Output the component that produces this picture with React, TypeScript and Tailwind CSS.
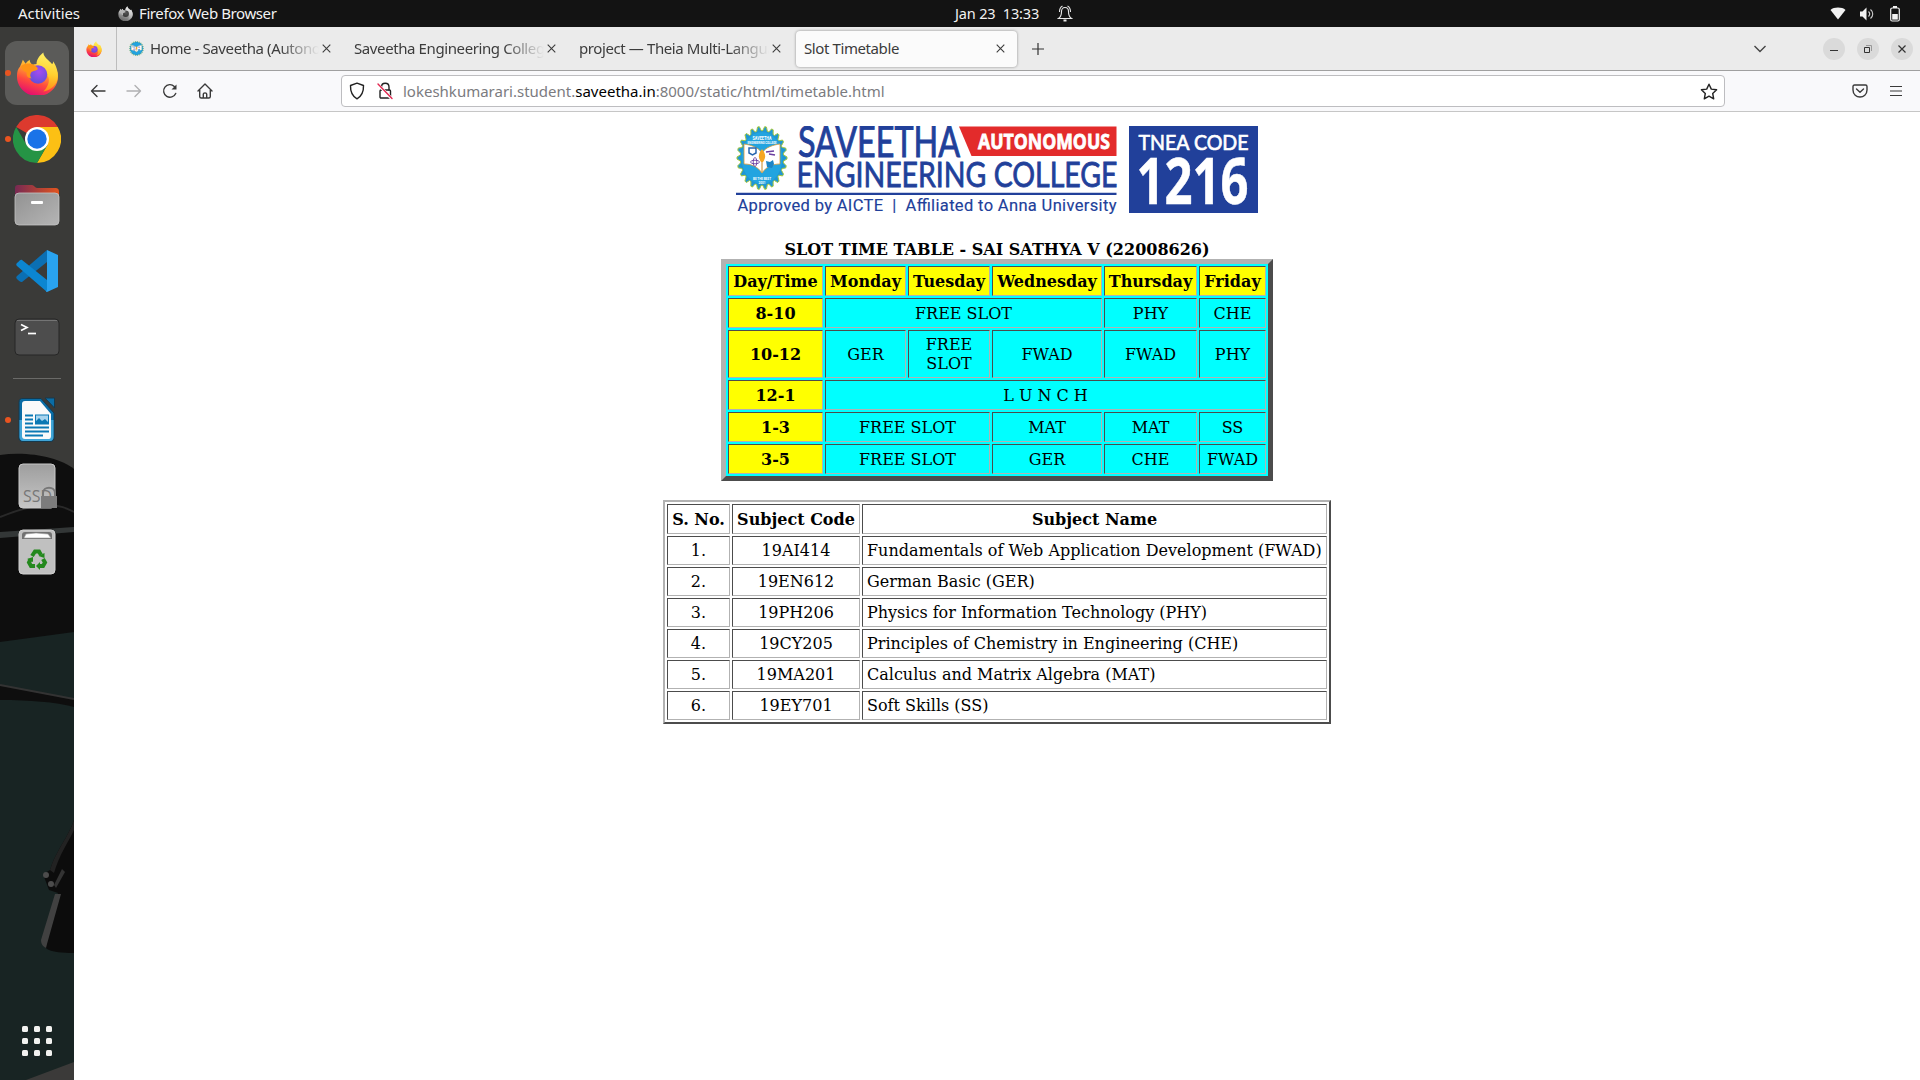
import React from "react";

const Firefox = ({ size, mono = false, id }: { size: number; mono?: boolean; id: string }) => (
  <svg width={size} height={size} viewBox="0 0 44 44" className="shrink-0">
    <defs>
      <linearGradient id={id + "a"} x1="0.75" y1="0" x2="0.35" y2="1">
        <stop offset="0" stopColor={mono ? "#f0f0f0" : "#fff44f"} />
        <stop offset="0.35" stopColor={mono ? "#c8c8c8" : "#ffa52e"} />
        <stop offset="0.65" stopColor={mono ? "#8a8a8a" : "#ff4b3e"} />
        <stop offset="1" stopColor={mono ? "#666" : "#e20a72"} />
      </linearGradient>
      <linearGradient id={id + "c"} x1="0.6" y1="0" x2="0.5" y2="1">
        <stop offset="0" stopColor={mono ? "#eee" : "#fff36a"} />
        <stop offset="0.55" stopColor={mono ? "#ccc" : "#ffd02f"} />
        <stop offset="1" stopColor={mono ? "#999" : "#ff8a16"} />
      </linearGradient>
      <radialGradient id={id + "b"} cx="0.55" cy="0.35" r="0.7">
        <stop offset="0" stopColor={mono ? "#555" : "#a64bf0"} />
        <stop offset="1" stopColor={mono ? "#333" : "#5b4fd8"} />
      </radialGradient>
    </defs>
    <path d="M7 8c1 1 2 3 3 4 1-2 3-3 4-4 0 2 1 4 3 5 3-1 8-1 12 2l8-3c4 4 6 8 6 13 0 11-9 20-21 20S1 36 1 25c0-5 1-8 3-10 1-2 2-4 3-7z" fill={"url(#" + id + "a)"} />
    <path d="M28 0.500c0 5 6 8 9 12 1-1 1-2 1-3 4 6 6 13 4 20-2 6-8 10-14 11 4-4 7-10 5-15-2-6-12-7-12-13 0-5 3-9 7-12z" fill={"url(#" + id + "c)"} />
    <circle cx="22.500" cy="23" r="9.500" fill={"url(#" + id + "b)"} />
    <path d="M5 15c3-4 9-4 13-2 3 2 5 3 4 5-2 2-6 1-7 4-1 2 0 4 1 5-3 0-6-2-5-6-2-1-5-3-6-6z" fill={mono ? "#b5b5b5" : "#ff9416"} />
  </svg>
);

const gearPath = (() => {
  let d = "";
  const teeth = 22;
  for (let i = 0; i < teeth * 4; i++) {
    const a = ((i - 0.5) / (teeth * 4)) * Math.PI * 2;
    const k = i % 4 < 2 ? 1 : 0.87;
    d += (i ? "L" : "M") + (26 + 25 * k * Math.cos(a)).toFixed(2) + " " + (32 + 31.5 * k * Math.sin(a)).toFixed(2);
  }
  return d + "Z";
})();

const Emblem = ({ w, h, small = false }: { w: number; h: number; small?: boolean }) => (
  <svg width={w} height={h} x="0" y="0" viewBox="0 0 52 64" preserveAspectRatio="none">
    <path d={gearPath} fill="#2196d3" stroke="#a5c83c" strokeWidth="1" />
    <ellipse cx="26" cy="32" rx="20.500" ry="26" fill="#22a4e0" />
    <path d="M8 18c7 1 14 3 18 9 4-6 11-8 18-9v20c-8 0-14 3-18 9-4-6-10-9-18-9z" fill="#fff" stroke="#d99b35" strokeWidth="0.8" />
    <path d="M26 27v19" stroke="#c98722" strokeWidth="1" />
    <path d="M26 23c4 5 4 9 1 13h-2c-3-4-3-8 1-13z" fill="#f5a623" />
    <path d="M13 22h7v5l-3.500 2-3.500-2z" fill="none" stroke="#2765ae" strokeWidth="1.500" />
    <ellipse cx="19" cy="36" rx="4.500" ry="1.800" fill="none" stroke="#6b3fa0" strokeWidth="0.900" />
    <ellipse cx="19" cy="36" rx="1.800" ry="4.500" fill="none" stroke="#6b3fa0" strokeWidth="0.900" />
    <path d="M30 26l8-1M33 28l6 1" stroke="#6b3fa0" strokeWidth="1.600" />
    <path d="M30 35l4 1 3-2 1 4-2 4-5-1z" fill="#1c84c6" />
    {!small && (
      <g textAnchor="middle" fontWeight="700" fill="#fff" fontFamily="Roboto, sans-serif">
        <text x="26" y="13.500" fontSize="4.600" textLength="19" lengthAdjust="spacingAndGlyphs">SAVEETHA</text>
        <text x="26" y="17.500" fontSize="3" textLength="29" lengthAdjust="spacingAndGlyphs">ENGINEERING COLLEGE</text>
        <text x="26" y="53.500" fontSize="3.600" textLength="18" lengthAdjust="spacingAndGlyphs">BE THE BEST</text>
        <text x="26" y="57.500" fontSize="3">2001</text>
      </g>
    )}
  </svg>
);

const Logo = () => (
  <svg width="522" height="88" viewBox="736 126 522 88" className="block">
    <g transform="translate(736 126)"><Emblem w={52} h={64} /></g>
    <g fill="#21409a" stroke="#21409a" fontFamily="Lato, sans-serif">
      <text x="798" y="157" fontSize="42" strokeWidth="0.900" textLength="162" lengthAdjust="spacingAndGlyphs">SAVEETHA</text>
      <text x="796.500" y="186.600" fontSize="34.500" strokeWidth="0.800" textLength="321" lengthAdjust="spacingAndGlyphs">ENGINEERING COLLEGE</text>
    </g>
    <path d="M959 126.500H1116.500V156H971.500z" fill="#e32b2b" />
    <text x="978" y="149.300" fontSize="21" fontWeight="700" fill="#fff" stroke="#fff" strokeWidth="0.800" fontFamily="Open Sans, sans-serif" textLength="132" lengthAdjust="spacingAndGlyphs">AUTONOMOUS</text>
    <path d="M736 192.700h380.500v2.300H736z" fill="#21409a" />
    <text x="737.500" y="211" fontSize="16.500" fill="#21409a" stroke="#21409a" strokeWidth="0.150" fontFamily="Roboto, sans-serif" textLength="379" lengthAdjust="spacing">Approved by AICTE&nbsp; |&nbsp; Affiliated to Anna University</text>
    <path d="M1129 126h129v87h-129z" fill="#21409a" />
    <text x="1138.500" y="150" fontSize="21.500" fill="#fff" stroke="#fff" strokeWidth="0.700" fontFamily="Lato, sans-serif" textLength="110" lengthAdjust="spacingAndGlyphs">TNEA CODE</text>
    <text x="1136.500" y="203.500" fontSize="64" fontWeight="700" fill="#fff" stroke="#fff" strokeWidth="0.500" fontFamily="Open Sans, sans-serif" textLength="112" lengthAdjust="spacingAndGlyphs">1216</text>
  </svg>
);

const DockBackdrop = () => (
  <svg width="74" height="1053" viewBox="0 27 74 1053" className="absolute left-0 top-0">
    <path d="M0 27h74v1053H0z" fill="#3a3a38" />
    <path d="M0 455c30-4 60 3 74 14v513H0z" fill="#0e0e0e" />
    <path d="M0 517c20-8 36-12 47-12 14 0 21 4 27 7" fill="none" stroke="#292929" strokeWidth="2" />
    <path d="M0 532l74-5v5L0 538z" fill="#333737" />
    <path d="M0 642l74-10v67L0 685z" fill="#182423" />
    <path d="M0 685l74 14" stroke="#333" strokeWidth="2" />
    <path d="M0 700c30 0 55 2 74 7v373H0z" fill="#182423" />
    <path d="M74 820C68 838 56 850 50 870l-7 4 6 16 9 3-15 48c0 8 6 12 31 12z" fill="#0c0c0c" />
    <path d="M74 820C68 838 56 850 50 870l4 3c6-20 14-30 20-43z" fill="#222" />
    <path d="M55 894l-14 46c0 5 3 7 5 8l1-4 14-50z" fill="#414141" />
    <path d="M54 885l8-16 3 3-9 16z" fill="#333" />
    <g fill="#4c4c4c"><circle cx="46" cy="875" r="3" /><circle cx="51" cy="884" r="3" /></g>
    <path d="M26 1080l48-18v18z" fill="#3b3a39" />
  </svg>
);

const Dot = () => <span className="absolute left-[5px] top-1/2 -mt-[3px] size-1.5 rounded-full bg-[#e95420]" />;

const DockItem = ({ children, running }: { children: React.ReactNode; running?: boolean }) => (
  <div className="relative flex h-[66px] w-[74px] shrink-0 items-center justify-center">
    {children}
    {running && <Dot />}
  </div>
);

const Chrome = () => (
  <svg width="48" height="48" viewBox="0 0 48 48">
    <path d="M24 24L3.200 12A24 24 0 0 1 44.800 12z" fill="#dc3a2e" />
    <path d="M24 12h20.800A24 24 0 0 1 24 48l10.400-18z" fill="#fcc014" />
    <path d="M3.200 12A24 24 0 0 0 24 48l10.400-18H13.600z" fill="#259445" />
    <circle cx="24" cy="24" r="12" fill="#fff" />
    <circle cx="24" cy="24" r="9.700" fill="#1a73e8" />
  </svg>
);

const Files = () => (
  <svg width="46" height="42" viewBox="0 0 46 42">
    <defs>
      <linearGradient id="ff"><stop offset="0" stopColor="#772953" /><stop offset="1" stopColor="#e2551f" /></linearGradient>
      <linearGradient id="fg" x1="0" y1="0" x2="1" y2="1"><stop offset="0" stopColor="#929292" /><stop offset="1" stopColor="#b5b5b5" /></linearGradient>
    </defs>
    <path d="M4 1h14c2 0 3 3 5 3h18c3 0 4 1 4 4v10H1V4c0-2 1-3 3-3z" fill="url(#ff)" />
    <rect x="1" y="9" width="44" height="32" rx="4" fill="url(#fg)" stroke="#c4c4c4" strokeWidth="0.800" />
    <rect x="17" y="17" width="12" height="3" rx="1" fill="#fff" />
  </svg>
);

const VSCode = () => (
  <svg width="42" height="42" viewBox="0 0 42 42">
    <path d="M31 0v12L6 32c-1 0-2 0-5-3-1-1-1-2 0-3z" fill="#0b6fb3" />
    <path d="M31 42V30L6 10c-1-1-2 0-5 3-1 1-1 2 0 3z" fill="#0c86d1" />
    <path d="M31 0l11 5v32l-11 5c-1 0-1-1 0-2z" fill="#29a3f0" />
  </svg>
);

const Terminal = () => (
  <svg width="46" height="38" viewBox="0 0 46 38">
    <rect x="1" y="1" width="44" height="36" rx="4" fill="#4d4d4d" stroke="#262626" />
    <path d="M3 2.500h40" stroke="#747474" />
    <path d="M7 6.500l6 3-6 3" fill="none" stroke="#fff" strokeWidth="1.700" />
    <path d="M14 15.500h8" stroke="#fff" strokeWidth="1.700" />
  </svg>
);

const Writer = () => (
  <svg width="38" height="46" viewBox="0 0 38 46">
    <path d="M5 1.500h18L36 16v24c0 3-1 4.500-4 4.500H5c-3 0-4-1.500-4-4V5.500c0-3 1-4 4-4z" fill="#0a6ca5" stroke="#16394d" />
    <path d="M1.500 23h34v17c0 2-1 4-4 4H5c-2 0-3.500-2-3.500-4z" fill="#3fa4d6" />
    <path d="M7 4h15l11 13v22c0 2-1 3-2 3H7c-2 0-3-1-3-3V7c0-2 1-3 3-3z" fill="#fafafa" />
    <path d="M27 1h9.500v10z" fill="#0a6ca5" stroke="#16394d" />
    <path d="M7 18.500h8M7 22.500h8M7 26.500h8M7 30.500h24M7 34.500h24M7 38.500h18" stroke="#0b78b4" strokeWidth="1.800" />
    <rect x="17.500" y="18" width="13" height="9" fill="#a8d4ee" stroke="#0b78b4" />
    <path d="M18 27v-3l3-3 3 3 3-2 3 3v2z" fill="#0b78b4" />
  </svg>
);

const Ssd = () => (
  <svg width="38" height="46" viewBox="0 0 38 46" className="overflow-visible">
    <defs><linearGradient id="sg" x2="0" y2="1"><stop stopColor="#9e9e9e" /><stop offset="1" stopColor="#c6c6c6" /></linearGradient></defs>
    <rect x="1" y="1" width="36" height="44" rx="4" fill="url(#sg)" stroke="#c8c8c8" />
    <text x="5" y="39" fontSize="15.500" fill="#777" fontFamily="Open Sans, sans-serif" textLength="29" lengthAdjust="spacingAndGlyphs">SSD</text>
    <path d="M25 34v-4c0-7 12-7 12 0v4" fill="none" stroke="#777" strokeWidth="2" />
    <rect x="23" y="33" width="16" height="12" fill="#7c7c7c" />
  </svg>
);

const Trash = () => (
  <svg width="38" height="46" viewBox="0 0 38 46">
    <rect x="1" y="1" width="36" height="44" rx="4" fill="#c0c0c0" stroke="#d0d0d0" />
    <path d="M4 6c0-2 1-3 3-3h24c2 0 3 1 3 3v4H4z" fill="#717171" />
    <path d="M6 9l2-4 10-1 12 1 3 4z" fill="#fff" stroke="#999" strokeWidth="0.600" />
    <g fill="none" stroke="#23881d" strokeWidth="4">
      <path d="M14 27l3-4.500h4l2 3.500" /><path d="M25 30l2 3.500-2 3.500h-4" /><path d="M17 37h-4l-2-3.500 1.500-3" />
    </g>
    <path d="M20.500 27l6-3v5zM22 33v8l-4-4zM9 30l6-2v5z" fill="#23881d" />
  </svg>
);

const Dock = () => (
  <aside className="relative flex w-[74px] shrink-0 flex-col overflow-hidden">
    <DockBackdrop />
    <div className="relative flex h-full flex-col pt-[13px]">
      <DockItem running>
        <div className="flex size-16 items-center justify-center rounded-xl bg-[#5b5b59]">
          <Firefox size={43} id="fd" />
        </div>
      </DockItem>
      <DockItem running><Chrome /></DockItem>
      <DockItem><Files /></DockItem>
      <DockItem><VSCode /></DockItem>
      <DockItem><Terminal /></DockItem>
      <div className="mx-[13px] mt-[8px] mb-[8px] h-px bg-[#6a6a68]" />
      <DockItem running><Writer /></DockItem>
      <DockItem><Ssd /></DockItem>
      <DockItem><Trash /></DockItem>
      <div className="mt-auto mb-6 grid grid-cols-3 gap-1.5 self-center">
        {Array.from({ length: 9 }, (_, i) => <span key={i} className="size-1.5 rounded-[1.5px] bg-[#f2f2f0]" />)}
      </div>
    </div>
  </aside>
);

const TopBar = () => (
  <header className="flex h-[27px] shrink-0 items-center bg-[#131313] text-[15px] leading-[27px] text-[#f2f2f2]">
    <div className="w-[118px] pl-[18px] tracking-[-0.05px]">Activities</div>
    <Firefox size={15} mono id="ft" />
    <div className="w-[822px] pl-1.5 tracking-[-0.4px]">Firefox Web Browser</div>
    <div className="w-[102px] whitespace-pre text-[14.5px] tracking-[-0.15px]">Jan 23  13:33</div>
    <svg width="16" height="18" viewBox="0 0 16 18" fill="none" stroke="#e8e8e8" strokeWidth="1.100">
      <path d="M1.500 13.500c3-2 3-4 3-7 0-2 1-4 3.500-4s3.500 2 3.500 4c0 3 0 5 3 7zM2.500 7c0-3 1-5 3-6M13.500 7c0-3-1-5-3-6" /><path d="M6.500 15.500h3" strokeWidth="2" />
    </svg>
    <div className="ml-auto flex items-center gap-[13px] pr-[20px]">
      <svg width="16" height="13" viewBox="0 0 16 13"><path d="M0.500 3C4-.2 12-.2 15.500 3L8 12.500z" fill="#f2f2f2" /></svg>
      <svg width="16" height="14" viewBox="0 0 16 14"><path d="M1 4.500h2.500L7.500.5v13l-4-4H1z" fill="#f2f2f2" /><path d="M9.500 4.500c1.500 1.500 1.500 3.500 0 5M11.500 2.500c3 2.500 3 6.500 0 9" fill="none" stroke="#d0d0d0" strokeWidth="1.100" /></svg>
      <svg width="10" height="16" viewBox="0 0 10 16" fill="#f2f2f2" className="ml-[2px]"><path d="M3 0h4v2H3z" /><rect x="0.700" y="2" width="8.600" height="13" rx="1.500" fill="none" stroke="#f2f2f2" strokeWidth="1.200" /><path d="M2.200 8h5.600v5.600H2.200z" /></svg>
    </div>
  </header>
);

const Close = () => (
  <svg width="9" height="9" viewBox="0 0 9 9" className="shrink-0"><path d="M.7.700l7.600 7.600M8.300.700L.7 8.300" stroke="#3c3c3c" strokeWidth="1.100" /></svg>
);

const Tab = ({ title, icon }: { title: string; icon?: React.ReactNode }) => (
  <div className="flex h-9 w-[225px] shrink-0 items-center pl-[12px]">
    {icon && <span className="mr-1.5 shrink-0">{icon}</span>}
    <span className="min-w-0 flex-1 overflow-hidden whitespace-nowrap [mask-image:linear-gradient(to_right,#000_calc(100%-40px),transparent)]">{title}</span>
    <span className="mr-[11px] ml-[3px]"><Close /></span>
  </div>
);

const TabBar = () => (
  <div className="flex h-11 shrink-0 items-center border-b border-[#a0a0a0] bg-[#ebebeb] text-[15px] tracking-[-0.4px] text-[#3c3c3c]">
    <div className="flex h-full w-[43px] items-center justify-center border-r border-[#bdbdbd] pr-0.5"><Firefox size={16} id="fp" /></div>
    <Tab icon={<Emblem w={15} h={15} small />} title="Home - Saveetha (Autonomous)" />
    <Tab title="Saveetha Engineering College" />
    <Tab title="project — Theia Multi-Language" />
    <div className="ml-[4px] flex h-9 w-[221px] items-center justify-between rounded bg-[#fbfbfb] pr-3 pl-2 shadow-[0_0_3px_rgba(0,0,0,0.4)]">
      <span>Slot Timetable</span><Close />
    </div>
    <svg width="12" height="12" viewBox="0 0 12 12" className="ml-[15px]"><path d="M6 0v12M0 6h12" stroke="#333" strokeWidth="1.200" /></svg>
    <svg width="14" height="8" viewBox="0 0 14 8" className="ml-auto"><path d="M1.500 1L7 6.500 12.500 1" fill="none" stroke="#444" strokeWidth="1.400" /></svg>
    <div className="mr-[7px] ml-14 flex gap-3">
      <span className="flex size-[22px] items-center justify-center rounded-full bg-[#dadada]"><span className="mt-1 h-px w-2 bg-[#333]" /></span>
      <span className="flex size-[22px] items-center justify-center rounded-full bg-[#dadada]">
        <svg width="8" height="8" viewBox="0 0 8 8" fill="none"><path d="M2 .5h5.500V6" stroke="#999" /><path d="M.5 2.500h5v5h-5z" stroke="#333" /></svg>
      </span>
      <span className="flex size-[22px] items-center justify-center rounded-full bg-[#dadada]">
        <svg width="8" height="8" viewBox="0 0 8 8"><path d="M.5.500l7 7M7.500.500l-7 7" stroke="#333" strokeWidth="1.200" /></svg>
      </span>
    </div>
  </div>
);

const line = { fill: "none", stroke: "#3a3a3a", strokeWidth: 1.4, strokeLinecap: "round" as const, strokeLinejoin: "round" as const };

const Toolbar = () => (
  <div className="flex h-[41px] shrink-0 items-center border-b border-[#c6c6c6] bg-[#f9f9fb]">
    <div className="flex w-[267px] gap-5 pl-4">
      <svg width="16" height="16" viewBox="0 0 16 16" {...line}><path d="M15 8H1.500M7 2.500L1.500 8 7 13.500" /></svg>
      <svg width="16" height="16" viewBox="0 0 16 16" {...line} stroke="#b0b0b2"><path d="M1 8h13.500M9 2.500L14.500 8 9 13.500" /></svg>
      <svg width="16" height="16" viewBox="0 0 16 16" {...line}><path d="M13.700 10.500A6.300 6.300 0 1 1 12.300 3.400" /><path d="M14.500 1.500v5h-5z" fill="#3a3a3a" stroke="none" /></svg>
      <svg width="16" height="16" viewBox="0 0 16 16" {...line} className="-ml-px"><path d="M1 8l7-7 7 7M2.700 7v6.500c0 1 .5 1.500 1.500 1.500h7.600c1 0 1.500-.5 1.500-1.500V7M6.300 15v-4c0-1.500 3.400-1.500 3.400 0v4" /></svg>
    </div>
    <div className="flex h-8 w-[1384px] items-center rounded border border-[#bdbdc0] bg-white pr-[6px] pl-[7px] text-[15px]">
      <svg width="16" height="18" viewBox="0 0 16 18" {...line} stroke="#222"><path d="M8 1.200l6.500 2.300c.2 6-1.500 10.500-6.500 13.300C3 14 1.300 9.500 1.500 3.500z" /></svg>
      <svg width="16" height="18" viewBox="0 0 16 18" {...line} stroke="#222" className="ml-[12px]"><rect x="3" y="8" width="10.500" height="8" rx="1" /><path d="M4.500 8V5c0-5 7.500-5 7.500 0v3" /><path d="M1 2.500l13.500 14" stroke="#fff" strokeWidth="3" /><path d="M1 2l14 14.500" stroke="#e22850" strokeWidth="1.400" /></svg>
      <div className="ml-[10px] whitespace-nowrap text-[#7b7b80]">lokeshkumarari.student.<span className="text-black">saveetha.in</span>:8000/static/html/timetable.html</div>
      <svg width="18" height="17" viewBox="0 0 18 17" {...line} stroke="#222" className="ml-auto"><path d="M9 1.200l2.300 4.900 5.300.7-3.900 3.700 1 5.300L9 13.200l-4.700 2.600 1-5.300L1.400 6.800l5.300-.7z" /></svg>
    </div>
    <svg width="16" height="14" viewBox="0 0 16 14" {...line} className="ml-auto"><path d="M2.500 1h11c1 0 1.500.5 1.500 1.500V6c0 9.300-14 9.300-14 0V2.500C1 1.500 1.500 1 2.500 1zM4.500 5L8 8.300 11.500 5" /></svg>
    <svg width="12" height="12" viewBox="0 0 12 12" {...line} strokeWidth={1.2} className="mr-[18px] ml-[22px]"><path d="M0 1.500h12M0 6h12M0 10.500h12" /></svg>
  </div>
);

type Slot = [string, number];
const rows: { time: string; slots: Slot[] }[] = [
  { time: "8-10", slots: [["FREE SLOT", 3], ["PHY", 1], ["CHE", 1]] },
  { time: "10-12", slots: [["GER", 1], ["FREE SLOT", 1], ["FWAD", 1], ["FWAD", 1], ["PHY", 1]] },
  { time: "12-1", slots: [["L U N C H", 5]] },
  { time: "1-3", slots: [["FREE SLOT", 2], ["MAT", 1], ["MAT", 1], ["SS", 1]] },
  { time: "3-5", slots: [["FREE SLOT", 2], ["GER", 1], ["CHE", 1], ["FWAD", 1]] },
];
const subjects = [
  ["19AI414", "Fundamentals of Web Application Development (FWAD)"],
  ["19EN612", "German Basic (GER)"],
  ["19PH206", "Physics for Information Technology (PHY)"],
  ["19CY205", "Principles of Chemistry in Engineering (CHE)"],
  ["19MA201", "Calculus and Matrix Algebra (MAT)"],
  ["19EY701", "Soft Skills (SS)"],
];

const cell = "border border-t-[#4c4c4c] border-l-[#4c4c4c] border-r-[#b2b2b2] border-b-[#b2b2b2] p-0 align-middle";
const frame = "table-fixed border-separate border-spacing-[2px] border-t-[#b2b2b2] border-l-[#b2b2b2] border-r-[#4c4c4c] border-b-[#4c4c4c]";

const Page = () => (
  <main className="flex flex-1 flex-col items-center bg-white pt-[14px] font-['DejaVu_Serif',serif] text-[16px] leading-[19px] text-black">
    <Logo />
    <h1 className="mt-[26px] mb-0 h-[19px] font-bold whitespace-nowrap">SLOT TIME TABLE - SAI SATHYA V (22008626)</h1>
    <table className={frame + " w-[552px] border-[5px] bg-[#00ffff] text-center"}>
      <colgroup>
        <col className="w-[95px]" /><col className="w-[81px]" /><col className="w-[82px]" /><col className="w-[110px]" /><col className="w-[93px]" /><col className="w-[67px]" />
      </colgroup>
      <tbody>
        <tr className="h-[30px]">
          {["Day/Time", "Monday", "Tuesday", "Wednesday", "Thursday", "Friday"].map((d) => (
            <th key={d} className={cell + " bg-[#ffff00] font-bold"}>{d}</th>
          ))}
        </tr>
        {rows.map((r) => (
          <tr key={r.time} className={r.time === "10-12" ? "h-[48px]" : "h-[30px]"}>
            <th className={cell + " bg-[#ffff00] font-bold"}>{r.time}</th>
            {r.slots.map(([s, n], i) => <td key={i} colSpan={n} className={cell + (r.time === "10-12" && s === "FREE SLOT" ? " px-4" : "")}>{s}</td>)}
          </tr>
        ))}
      </tbody>
    </table>
    <table className={frame + " mt-[19px] w-[668px] border-2 text-center"}>
      <colgroup><col className="w-[63px]" /><col className="w-[128px]" /><col className="w-[465px]" /></colgroup>
      <tbody>
        <tr className="h-[30px]">
          {["S. No.", "Subject Code", "Subject Name"].map((d) => <th key={d} className={cell + " font-bold"}>{d}</th>)}
        </tr>
        {subjects.map(([code, name], i) => (
          <tr key={code} className="h-[29px]">
            <td className={cell}>{i + 1}.</td>
            <td className={cell}>{code}</td>
            <td className={cell + " pl-1 text-left whitespace-nowrap"}>{name}</td>
          </tr>
        ))}
      </tbody>
    </table>
  </main>
);

export default function App() {
  return (
    <div className="flex h-[1080px] w-[1920px] flex-col overflow-hidden font-['Noto_Sans',sans-serif]">
      <TopBar />
      <div className="flex min-h-0 flex-1">
        <Dock />
        <div className="flex min-w-0 flex-1 flex-col">
          <TabBar />
          <Toolbar />
          <Page />
        </div>
      </div>
    </div>
  );
}
